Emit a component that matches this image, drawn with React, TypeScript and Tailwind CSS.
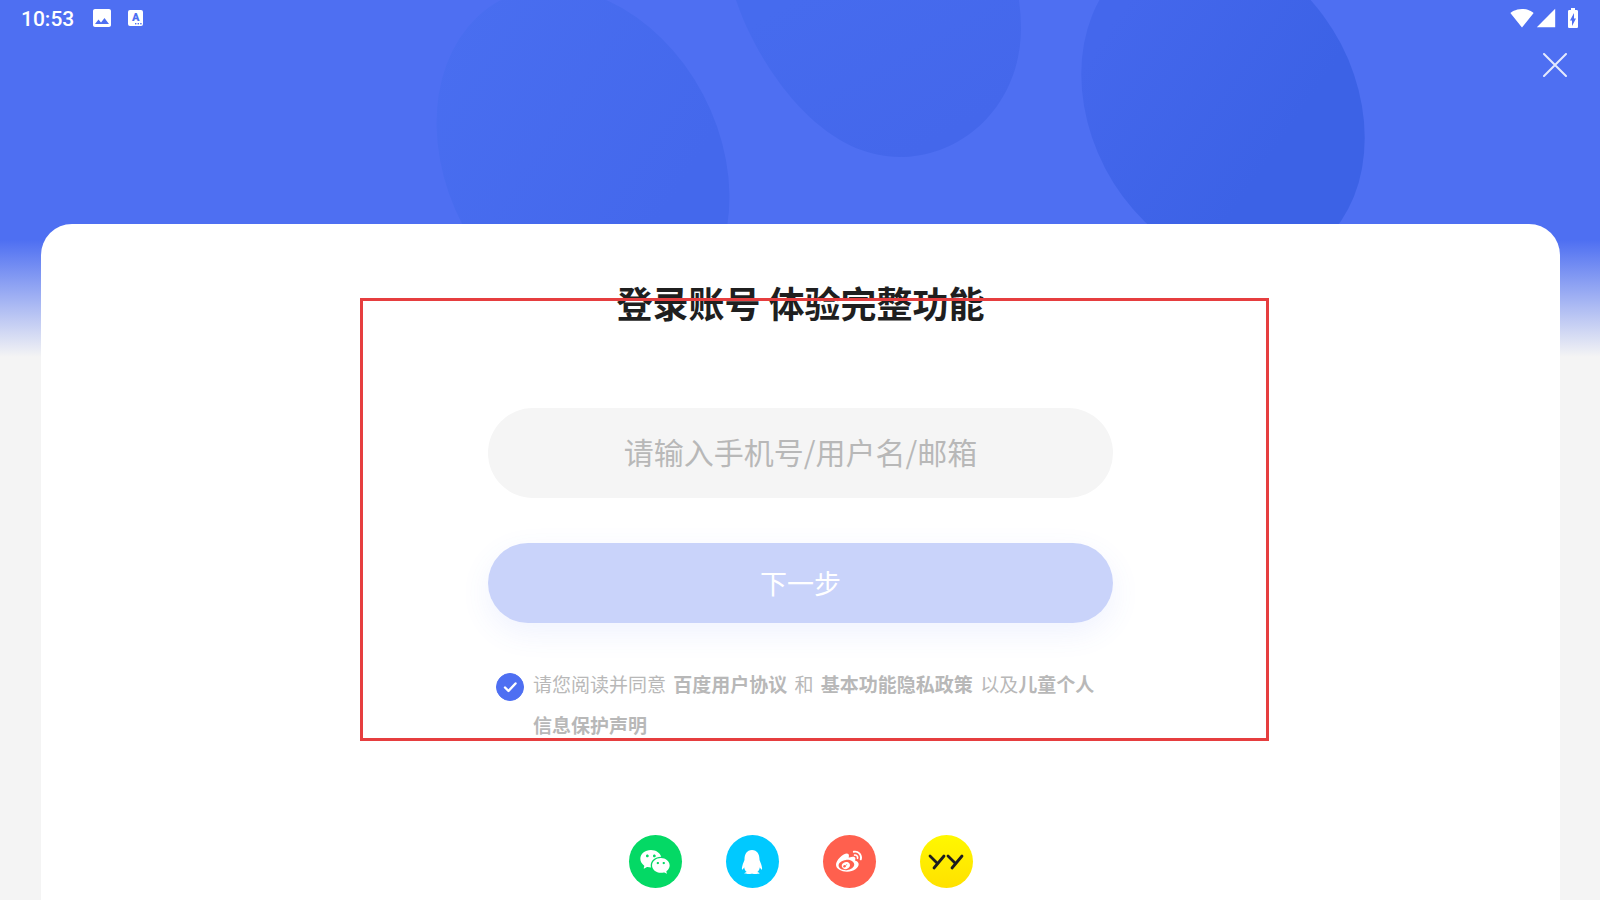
import React, { useState } from 'react';
import { MdBatteryChargingFull, MdImage, MdSignalCellular4Bar, MdSignalWifi4Bar } from 'react-icons/md';
import { FaQq, FaWeibo } from 'react-icons/fa';
import { RiWechatFill } from 'react-icons/ri';

const HeroShapes = () => (
  <svg
    className="absolute inset-x-0 top-0 h-[240px] w-full"
    viewBox="0 0 1600 240"
    preserveAspectRatio="xMidYMin slice"
    aria-hidden="true"
  >
    <defs>
      <linearGradient id="left" x1="0" y1="0" x2="1" y2="1">
        <stop offset="0.1" stopColor="#496ef0" />
        <stop offset="0.7" stopColor="#4468ec" />
      </linearGradient>
      <linearGradient id="middle" x1="0" y1="0" x2="1" y2="1">
        <stop offset="0.1" stopColor="#466bee" />
        <stop offset="0.8" stopColor="#4467eb" />
      </linearGradient>
      <linearGradient id="right" x1="0" y1="0" x2="1" y2="1">
        <stop offset="0.2" stopColor="#4467ec" />
        <stop offset="0.65" stopColor="#3c62e6" />
      </linearGradient>
    </defs>
    <ellipse rx="143" ry="172" fill="url(#left)" transform="matrix(1 0 0.184 1 583 160)" />
    <path d="M736 0C754 55 814 157 899 157C965 157 1021 103 1021 28Q1021 14 1019 0Z" fill="url(#middle)" />
    <ellipse rx="139" ry="163" fill="url(#right)" transform="matrix(1 0 0.17 1 1223 106)" />
  </svg>
);

const StatusBar = () => (
  <div className="flex h-9 items-center justify-between pl-[21px] pr-[15px]">
    <div className="flex items-center">
      <span className="pt-0.5 font-[Roboto,sans-serif] text-[21px] leading-9 font-medium">10:53</span>
      <MdImage className="ml-4 size-6" />
      <span className="relative ml-[14px] flex h-4 w-[15px] justify-center rounded-[2px] bg-white font-[Roboto,sans-serif] text-[11px] leading-[15px] font-black text-[#4e6ff2]">
        A
        <svg className="absolute right-0 bottom-0 h-1 w-2" viewBox="0 0 8 4" fill="currentColor" aria-hidden="true">
          <rect x="0" y="1" width="1.4" height="1.4" />
          <rect x="2.6" y="1" width="1.4" height="1.4" />
          <rect x="5.2" y="1" width="1.4" height="1.4" />
        </svg>
      </span>
    </div>
    <div className="flex items-center">
      <MdSignalWifi4Bar className="size-6" />
      <MdSignalCellular4Bar className="ml-px size-[22px]" />
      <MdBatteryChargingFull className="ml-1 size-6" />
    </div>
  </div>
);

const YYLogo = () => (
  <svg className="h-4 w-9" viewBox="0 0 36 16" stroke="#1d1d1f" strokeWidth="2.8" strokeLinecap="round" aria-hidden="true">
    <line x1="2" y1="2" x2="9" y2="9" />
    <line x1="16" y1="2" x2="6" y2="14" />
    <line x1="20" y1="2" x2="27" y2="9" />
    <line x1="34" y1="2" x2="24" y2="14" />
  </svg>
);

const socials = [
  { name: '微信', color: 'bg-[#04d965]', icon: <RiWechatFill className="size-8" /> },
  { name: 'QQ', color: 'bg-[#00c9ff]', icon: <FaQq className="size-6" /> },
  { name: '微博', color: 'bg-[#ff604e]', icon: <FaWeibo className="size-[26px]" /> },
  { name: 'YY', color: 'bg-linear-to-b from-[#fff800] to-[#ffe100]', icon: <YYLogo /> },
];

const App = () => {
  const [account, setAccount] = useState('');
  const [agreed, setAgreed] = useState(true);

  return (
    <div className="relative flex min-h-screen flex-col bg-[#f4f4f4] bg-[linear-gradient(to_bottom,#4e6ff2_240px,#f4f4f4_357px)] font-['Noto_Sans_CJK_SC',sans-serif]">
      <HeroShapes />

      <header className="relative h-56 text-white">
        <StatusBar />
        <div className="flex justify-end pt-3 pr-[28px]">
          <button type="button" aria-label="关闭" className="flex size-[34px] items-center justify-center">
            <svg className="size-6" viewBox="0 0 24 24" stroke="white" strokeOpacity="0.85" strokeWidth="2" strokeLinecap="round" aria-hidden="true">
              <path d="M1 1l22 22M23 1L1 23" />
            </svg>
          </button>
        </div>
      </header>

      <main className="relative mr-10 ml-[41px] flex flex-1 flex-col items-center rounded-t-[31px] bg-white pt-[51px] pb-3">
        <h1 className="text-4xl leading-[54px] font-bold text-[#1f1f1f]">登录账号 体验完整功能</h1>

        <form className="mt-[79px] w-full max-w-[625px]" onSubmit={(e) => e.preventDefault()}>
          <input
            type="text"
            aria-label="账号"
            value={account}
            onChange={(e) => setAccount(e.target.value)}
            placeholder="请输入手机号/用户名/邮箱"
            className="block h-[90px] w-full rounded-full bg-[#f5f5f5] pb-1 text-center text-3xl text-[#1f1f1f] outline-none placeholder:text-[#b8b8b8]"
          />
          <button
            type="submit"
            className="mt-[45px] block h-20 w-full rounded-full bg-[#c9d3fa] text-[27px] text-white shadow-[0_10px_30px_rgba(78,111,242,0.09)]"
          >
            下一步
          </button>

          <div className="mt-10 flex gap-[9px] pr-3 pl-2">
            <span className="relative mt-[10px] size-7 shrink-0">
              <input
                id="agree"
                type="checkbox"
                checked={agreed}
                onChange={(e) => setAgreed(e.target.checked)}
                className="block size-7 appearance-none rounded-full border border-[#b8b8b8] checked:border-[#4e6ff2] checked:bg-[#4e6ff2]"
              />
              <svg className="pointer-events-none absolute inset-0" viewBox="0 0 28 28" fill="none" stroke="white" strokeWidth="2.4" strokeLinecap="round" strokeLinejoin="round" aria-hidden="true">
                <path d="M9 14.5l3.5 3.5 7-7.5" />
              </svg>
            </span>
            <p className="text-[19px] leading-[41px] text-[#b8b8b8]">
              <label htmlFor="agree">请您阅读并同意</label>{' '}
              <a href="#agreement" className="mx-[3px] font-bold">百度用户协议</a>{' '}
              <span>和</span>{' '}
              <a href="#privacy" className="mx-[3px] font-bold">基本功能隐私政策</a>{' '}
              <span>以及</span>
              <a href="#children" className="font-bold">儿童个人信息保护声明</a>
            </p>
          </div>
        </form>

        <div className="mt-[90px] flex gap-11">
          {socials.map((item) => (
            <button
              key={item.name}
              type="button"
              aria-label={item.name}
              className={`flex size-[53px] items-center justify-center rounded-full text-white ${item.color}`}
            >
              {item.icon}
            </button>
          ))}
        </div>

        {/* red frame over the login area */}
        <div className="pointer-events-none absolute top-[74px] left-1/2 -ml-[441px] h-[443px] w-[909px] border-3 border-[#e63e3f]" />
      </main>
    </div>
  );
};

export default App;
